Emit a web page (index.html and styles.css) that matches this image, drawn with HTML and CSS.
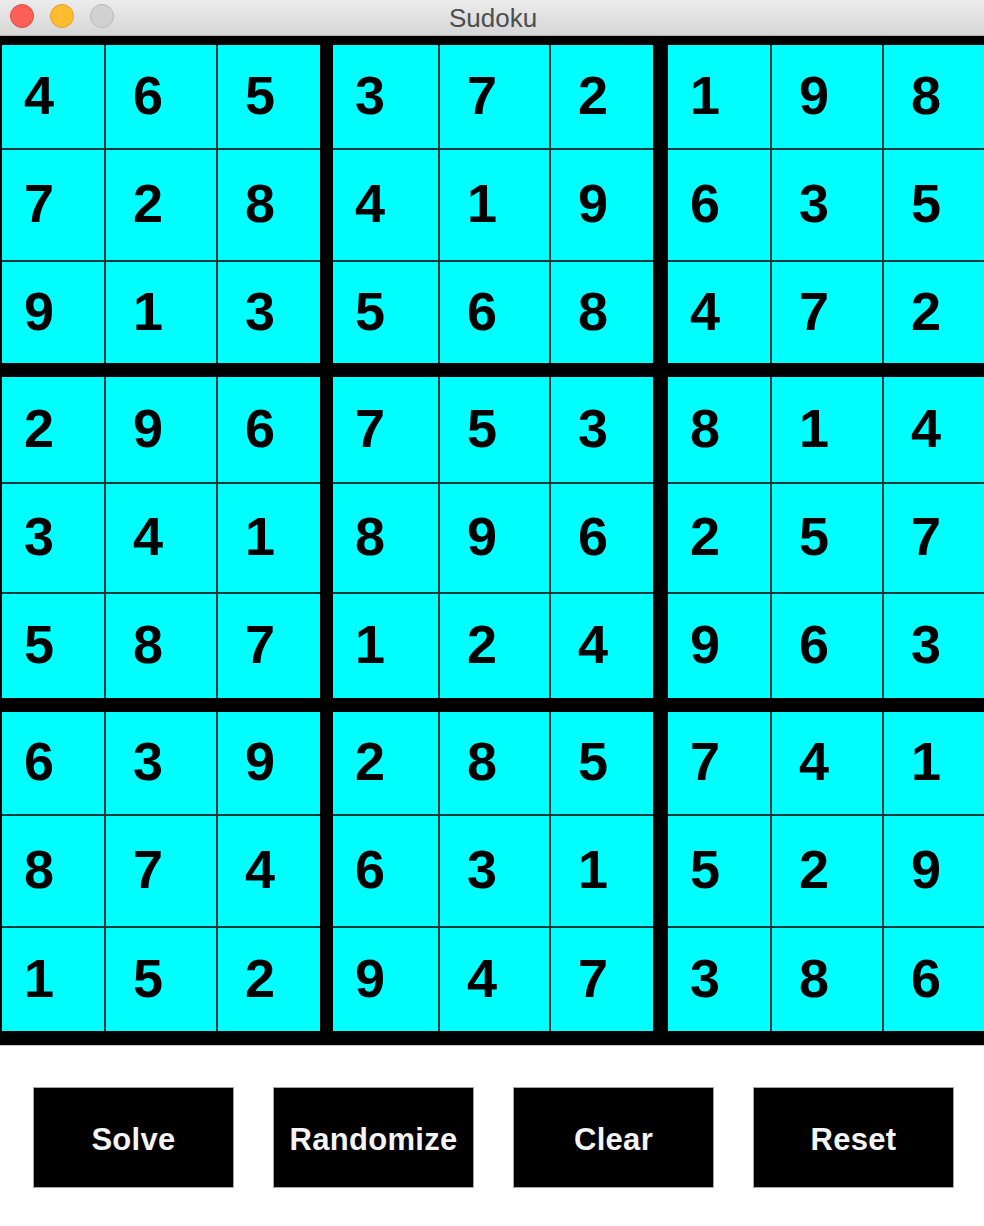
FILE: index.html
```html
<!DOCTYPE html>
<html>
<head>
<meta charset="utf-8">
<title>Sudoku</title>
<link rel="stylesheet" href="styles.css">
</head>
<body>
<div class="window">
  <div class="titlebar">
    <div class="lights">
      <span class="light red"></span>
      <span class="light yellow"></span>
      <span class="light gray"></span>
    </div>
    <div class="title">Sudoku</div>
  </div>
  <div class="board">
    <div class="band band-1">
      <div class="box box-c1">
        <div class="cell first">4</div><div class="cell">6</div><div class="cell">5</div>
        <div class="cell first">7</div><div class="cell">2</div><div class="cell">8</div>
        <div class="cell first">9</div><div class="cell">1</div><div class="cell">3</div>
      </div>
      <div class="box box-c2">
        <div class="cell first">3</div><div class="cell">7</div><div class="cell">2</div>
        <div class="cell first">4</div><div class="cell">1</div><div class="cell">9</div>
        <div class="cell first">5</div><div class="cell">6</div><div class="cell">8</div>
      </div>
      <div class="box box-c3">
        <div class="cell first">1</div><div class="cell">9</div><div class="cell">8</div>
        <div class="cell first">6</div><div class="cell">3</div><div class="cell">5</div>
        <div class="cell first">4</div><div class="cell">7</div><div class="cell">2</div>
      </div>
    </div>
    <div class="band band-2">
      <div class="box box-c1">
        <div class="cell first">2</div><div class="cell">9</div><div class="cell">6</div>
        <div class="cell first">3</div><div class="cell">4</div><div class="cell">1</div>
        <div class="cell first">5</div><div class="cell">8</div><div class="cell">7</div>
      </div>
      <div class="box box-c2">
        <div class="cell first">7</div><div class="cell">5</div><div class="cell">3</div>
        <div class="cell first">8</div><div class="cell">9</div><div class="cell">6</div>
        <div class="cell first">1</div><div class="cell">2</div><div class="cell">4</div>
      </div>
      <div class="box box-c3">
        <div class="cell first">8</div><div class="cell">1</div><div class="cell">4</div>
        <div class="cell first">2</div><div class="cell">5</div><div class="cell">7</div>
        <div class="cell first">9</div><div class="cell">6</div><div class="cell">3</div>
      </div>
    </div>
    <div class="band band-3">
      <div class="box box-c1">
        <div class="cell first">6</div><div class="cell">3</div><div class="cell">9</div>
        <div class="cell first">8</div><div class="cell">7</div><div class="cell">4</div>
        <div class="cell first">1</div><div class="cell">5</div><div class="cell">2</div>
      </div>
      <div class="box box-c2">
        <div class="cell first">2</div><div class="cell">8</div><div class="cell">5</div>
        <div class="cell first">6</div><div class="cell">3</div><div class="cell">1</div>
        <div class="cell first">9</div><div class="cell">4</div><div class="cell">7</div>
      </div>
      <div class="box box-c3">
        <div class="cell first">7</div><div class="cell">4</div><div class="cell">1</div>
        <div class="cell first">5</div><div class="cell">2</div><div class="cell">9</div>
        <div class="cell first">3</div><div class="cell">8</div><div class="cell">6</div>
      </div>
    </div>
  </div>
  <div class="controls">
    <button class="btn">Solve</button>
    <button class="btn">Randomize</button>
    <button class="btn">Clear</button>
    <button class="btn">Reset</button>
  </div>
</div>
</body>
</html>
```
FILE: styles.css
```css
html, body {
  margin: 0;
  padding: 0;
  background: #ffffff;
}
body {
  width: 984px;
  height: 1226px;
  overflow: hidden;
  font-family: "Liberation Sans", Arial, sans-serif;
}
.window {
  width: 984px;
  overflow: hidden;
}
.titlebar {
  height: 36px;
  box-sizing: border-box;
  background: linear-gradient(#ececec, #d6d6d6);
  border-bottom: 1px solid #b4b4b4;
  display: flex;
  align-items: center;
  position: relative;
}
.lights {
  display: flex;
  gap: 16px;
  padding-left: 10px;
  position: absolute;
  left: 0;
  top: 4px;
}
.light {
  width: 24px;
  height: 24px;
  border-radius: 50%;
  box-sizing: border-box;
}
.light.red { background: #fe5f57; border: 1px solid #e5483f; }
.light.yellow { background: #febc2e; border: 1px solid #e0a026; }
.light.gray { background: #d1d1d1; border: 1px solid #b9b9b9; }
.title {
  flex: 1;
  text-align: center;
  font-size: 26px;
  color: #4d4d4d;
  line-height: 34px;
  padding-left: 2px;
}
.board {
  background: #000000;
  padding: 9px 0 14px 2px;
  display: flex;
  flex-direction: column;
  gap: 14px;
  width: 1000px;
  border-bottom: 1px solid #c8c8c8;
}
.band {
  display: flex;
}
.box {
  display: grid;
  gap: 2px;
  background: #0e3a3a;
}
.box-c1 { grid-template-columns: 102px 110px 102px; }
.box-c2 { grid-template-columns: 105px 109px 102px; margin-left: 13px; }
.box-c3 { grid-template-columns: 102px 110px 102px; margin-left: 15px; }
.band-1 .box { grid-template-rows: 103px 110px 101px; }
.band-2 .box { grid-template-rows: 105px 108px 104px; }
.band-3 .box { grid-template-rows: 102px 110px 103px; }
.cell {
  background: #00ffff;
  color: #000000;
  font-weight: bold;
  font-size: 54px;
  line-height: 1;
  display: flex;
  align-items: center;
  padding-left: 27px;
  padding-bottom: 4px;
  box-sizing: border-box;
}
.cell.first {
  padding-left: 22px;
}
.controls {
  display: flex;
  gap: 39px;
  padding: 41px 0 0 33px;
}
.btn {
  width: 201px;
  height: 101px;
  box-sizing: border-box;
  background: #000000;
  border: 1px solid #a6a6a6;
  color: #f4f4f4;
  font-family: "Liberation Sans", Arial, sans-serif;
  font-weight: bold;
  font-size: 31px;
  letter-spacing: 0.3px;
  padding: 4px 0 0 0;
  margin: 0;
  display: flex;
  align-items: center;
  justify-content: center;
}
```
